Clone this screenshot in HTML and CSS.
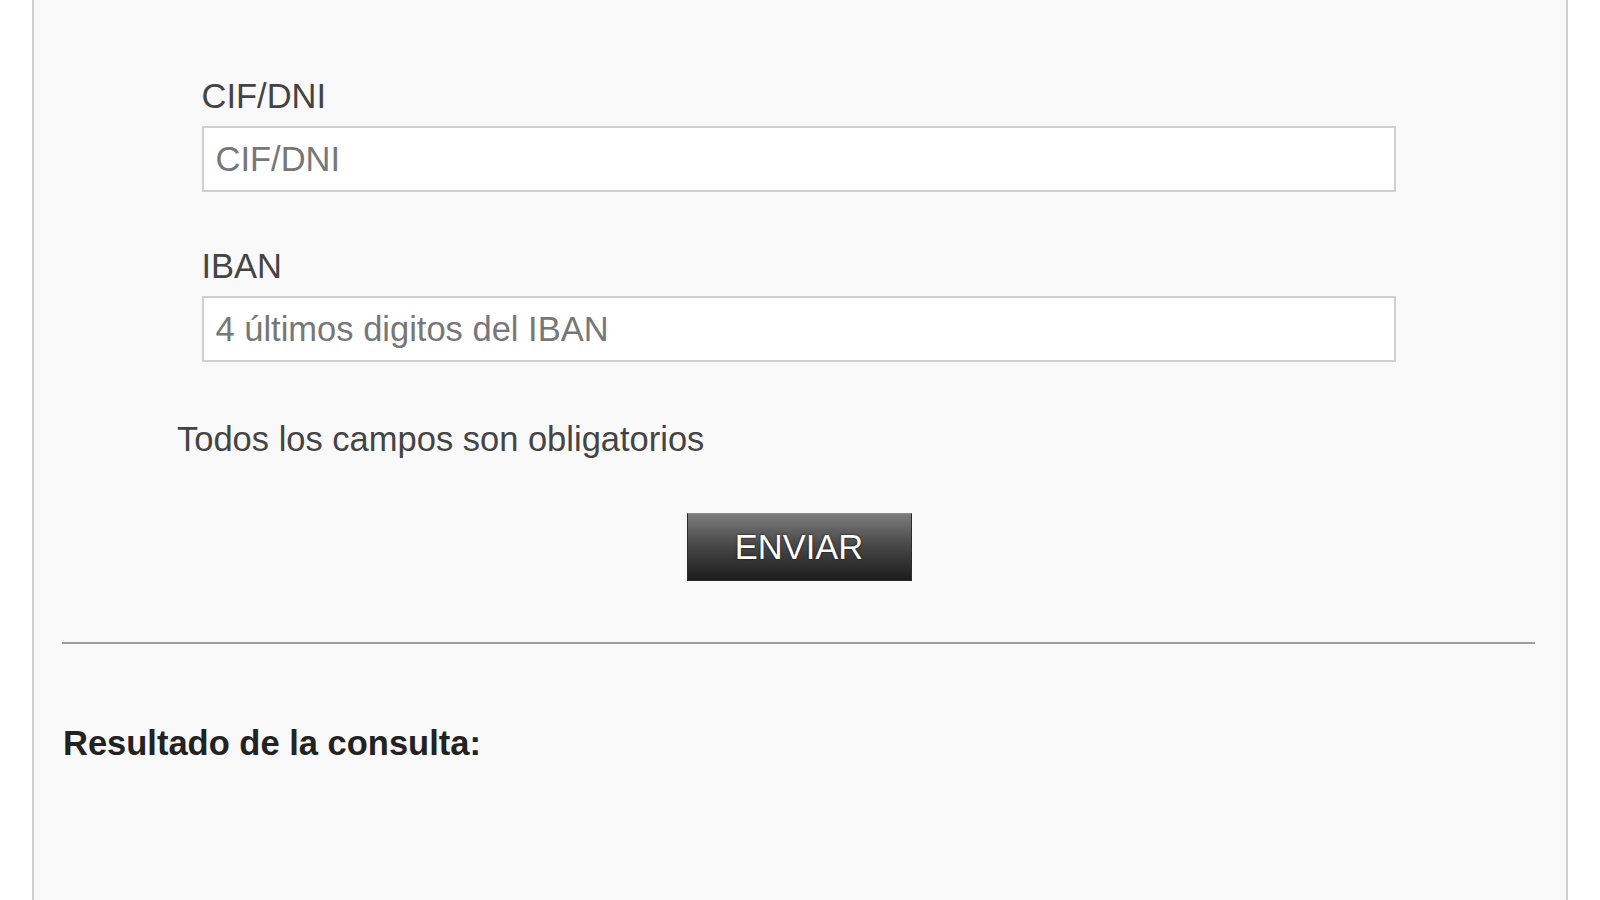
FILE: index.html
```html
<!DOCTYPE html>
<html lang="es">
<head>
<meta charset="utf-8">
<title>Consulta</title>
<link rel="stylesheet" href="styles.css">
</head>
<body>
<div class="panel">
  <form class="form">
    <div class="field">
      <label class="label" for="cif">CIF/DNI</label>
      <input class="input" id="cif" type="text" placeholder="CIF/DNI">
    </div>
    <div class="field">
      <label class="label" for="iban">IBAN</label>
      <input class="input" id="iban" type="text" placeholder="4 últimos digitos del IBAN">
    </div>
  </form>
  <p class="note">Todos los campos son obligatorios</p>
  <div class="actions">
    <button class="btn" type="button">ENVIAR</button>
  </div>
  <hr class="rule">
  <h3 class="result-title">Resultado de la consulta:</h3>
</div>
</body>
</html>
```

FILE: styles.css
```css
html, body {
  margin: 0;
  padding: 0;
  background: #ffffff;
}

body {
  font-family: "Liberation Sans", Arial, sans-serif;
  color: #444;
}

.panel {
  box-sizing: border-box;
  margin-left: 32px;
  width: 1536px;
  min-height: 1000px;
  background: #f9f9f9;
  border-left: 2px solid #cfcfcf;
  border-right: 2px solid #cfcfcf;
  padding: 78px 31px 200px 28px;
}

.form {
  width: 1194px;
  margin: 0 auto;
}

.field {
  margin-bottom: 56px;
}

.field:last-child {
  margin-bottom: 0;
}

.label {
  display: block;
  font-size: 34.5px;
  line-height: 36px;
  color: #444;
  margin-bottom: 12px;
}

.input {
  display: block;
  box-sizing: border-box;
  width: 100%;
  height: 66px;
  margin: 0;
  padding: 0 12px;
  border: 2px solid #d0d0d0;
  background: #fff;
  font-family: "Liberation Sans", Arial, sans-serif;
  font-size: 34.5px;
  color: #444;
  outline: none;
}

.input::placeholder {
  color: #777;
  opacity: 1;
}

.note {
  margin: 59px 0 0 115px;
  font-size: 34.5px;
  line-height: 36px;
  color: #444;
}

.actions {
  display: flex;
  justify-content: center;
  margin-top: 56px;
  padding-left: 1px;
}

.btn {
  box-sizing: border-box;
  width: 225px;
  height: 68px;
  margin: 0;
  padding: 0;
  border: 1px solid #2a2a2a;
  border-top-color: #8a8a8a;
  background: linear-gradient(to bottom, #7c7c7c 0%, #4a4a4a 45%, #1c1c1c 100%);
  color: #fff;
  font-family: "Liberation Sans", Arial, sans-serif;
  font-size: 34.5px;
  text-shadow: 0 0 2px #000;
  cursor: pointer;
}

.rule {
  margin: 61px 0 0 0;
  height: 0;
  border: 0;
  border-top: 2px solid #9e9e9e;
}

.result-title {
  margin: 81px 0 0 1px;
  font-size: 34.5px;
  line-height: 36px;
  font-weight: bold;
  color: #222;
}
```
